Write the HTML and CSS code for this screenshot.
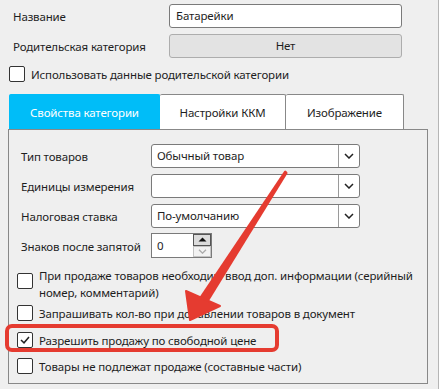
FILE: index.html
```html
<!DOCTYPE html>
<html lang="ru">
<head>
    <meta charset="UTF-8">
    <title>Свойства категории</title>
    <link rel="stylesheet" href="styles.css">
</head>
<body>
    <div class="window">
        <div class="field">
            <span class="label">Название</span>
            <div class="text-input">Батарейки</div>
        </div>
        <div class="field">
            <span class="label">Родительская категория</span>
            <div class="flat-button">Нет</div>
        </div>
        <div class="check top-check">
            <span class="box"></span>
            <span class="check-text">Использовать данные родительской категории</span>
        </div>

        <div class="tabs">
            <div class="tab active t1">Свойства категории</div>
            <div class="tab t2">Настройки ККМ</div>
            <div class="tab t3">Изображение</div>
        </div>
        <div class="panel">
            <div class="grid">
                <span class="label">Тип товаров</span>
                <div class="combo"><span class="value">Обычный товар</span><span class="drop"><svg width="10" height="6" viewBox="0 0 10 6"><path d="M1 1 L5 5 L9 1" fill="none" stroke="#222" stroke-width="1.5"/></svg></span></div>

                <span class="label">Единицы измерения</span>
                <div class="combo"><span class="value"></span><span class="drop"><svg width="10" height="6" viewBox="0 0 10 6"><path d="M1 1 L5 5 L9 1" fill="none" stroke="#222" stroke-width="1.5"/></svg></span></div>

                <span class="label">Налоговая ставка</span>
                <div class="combo"><span class="value">По-умолчанию</span><span class="drop"><svg width="10" height="6" viewBox="0 0 10 6"><path d="M1 1 L5 5 L9 1" fill="none" stroke="#222" stroke-width="1.5"/></svg></span></div>

                <span class="label">Знаков после запятой</span>
                <div class="spin">
                    <span class="value">0</span>
                    <div class="spin-buttons">
                        <span class="up"><svg width="9" height="5" viewBox="0 0 9 5"><path d="M0.5 4.5 L4.5 0.5 L8.5 4.5 Z" fill="#111"/></svg></span>
                        <span class="down"><svg width="9" height="5" viewBox="0 0 9 5"><path d="M1 0.8 L4.5 4.2 L8 0.8" fill="none" stroke="#aaa" stroke-width="1.3"/></svg></span>
                    </div>
                </div>
            </div>

            <div class="checks">
                <div class="check multi">
                    <span class="box"></span>
                    <span class="check-text">При продаже товаров необходим ввод доп. информации (серийный номер, комментарий)</span>
                </div>
                <div class="check c2">
                    <span class="box"></span>
                    <span class="check-text">Запрашивать кол-во при добавлении товаров в документ</span>
                </div>
                <div class="check c3">
                    <span class="box checked"><svg width="10" height="8" viewBox="0 0 10 8"><path d="M1 4 L4 6.8 L9 1" fill="none" stroke="#222" stroke-width="1.5"/></svg></span>
                    <span class="check-text">Разрешить продажу по свободной цене</span>
                </div>
                <div class="check c4">
                    <span class="box"></span>
                    <span class="check-text">Товары не подлежат продаже (составные части)</span>
                </div>
            </div>
        </div>
    </div>

    <!-- annotation overlay -->
    <div class="highlight"></div>
    <svg class="arrow" width="439" height="389" viewBox="0 0 439 389">
        <path d="M284.3 170.9 Q286 169.5 287.7 173.1 L207.2 303.7 L198.8 298.3 Z" fill="#e53b30"/>
        <path d="M186 291 L190 320 L220 306 Z" fill="#e53b30" stroke="#e53b30" stroke-width="2" stroke-linejoin="round"/>
    </svg>
</body>
</html>
```

FILE: styles.css
```css
body {
    margin: 0;
    background-color: #efefef;
    font-family: "Noto Sans", "Open Sans", sans-serif;
    font-size: 11.5px;
    letter-spacing: -0.15px;
    color: #1e1e1e;
    width: 439px;
    height: 389px;
    overflow: hidden;
    position: relative;
}
.window {
    padding: 4px 0 0 0;
    border-right: 1px solid #b5b5b5;
    height: 385px;
    width: 438px;
}
.field {
    display: flex;
    align-items: center;
    height: 24px;
    margin-bottom: 6px;
}
.field .label {
    width: 156px;
    padding-left: 13px;
}
.text-input {
    width: 233px;
    height: 24px;
    box-sizing: border-box;
    background-color: white;
    border: 1px solid #7a7a7a;
    border-radius: 3px;
    padding: 0 6px;
    line-height: 22px;
}
.flat-button {
    width: 233px;
    height: 24px;
    box-sizing: border-box;
    background-color: #e3e3e3;
    border: 1px solid #adadad;
    border-radius: 3px;
    text-align: center;
    line-height: 22px;
}
.check {
    display: flex;
    align-items: center;
    gap: 6px;
}
.box {
    width: 16px;
    height: 16px;
    box-sizing: border-box;
    flex: none;
    background-color: white;
    border: 1px solid #333;
    border-radius: 2px;
    display: flex;
    align-items: center;
    justify-content: center;
}
.top-check {
    margin: 2px 0 0 9px;
    height: 20px;
}
.tabs {
    display: flex;
    margin: 10px 0 0 9px;
    height: 35px;
}
.tab {
    box-sizing: border-box;
    height: 35px;
    display: flex;
    align-items: center;
    justify-content: center;
    background-color: white;
    border: 1px solid #888;
    border-bottom: none;
    border-radius: 2px 2px 0 0;
}
.tab.active {
    background-color: #00bdf8;
    border-color: #00bdf8;
    color: white;
}
.t1 { width: 151px; }
.t2 { width: 126px; border-left: none; }
.t3 { width: 118px; border-left: none; }
.panel {
    margin-left: 8px;
    width: 420px;
    height: 255px;
    box-sizing: border-box;
    border: 1px solid #888;
    padding: 14px 3px 0 12px;
}
.grid {
    display: grid;
    grid-template-columns: 130px 209px;
    row-gap: 6px;
    align-items: center;
}
.combo {
    display: flex;
    height: 24px;
    box-sizing: border-box;
    background-color: white;
    border: 1px solid #7a7a7a;
    border-radius: 3px;
}
.combo .value {
    flex: 1;
    padding-left: 5px;
    line-height: 22px;
}
.drop {
    width: 20px;
    border-left: 1px solid #9a9a9a;
    display: flex;
    align-items: center;
    justify-content: center;
}
.spin {
    display: flex;
    width: 61px;
    height: 25px;
    margin-top: -1px;
    box-sizing: border-box;
    background-color: white;
    border: 1px solid #7a7a7a;
}
.spin .value {
    flex: 1;
    padding-left: 5px;
    line-height: 23px;
}
.spin-buttons {
    width: 18px;
    display: flex;
    flex-direction: column;
}
.spin-buttons span {
    flex: 1;
    display: flex;
    align-items: center;
    justify-content: center;
    box-sizing: border-box;
}
.up {
    background-color: #dcdcdc;
    border: 1px solid #555;
}
.down {
    background-color: #f2f2f2;
    border: 1px solid #c4c4c4;
}
.checks {
    margin: 8.5px 0 0 -4px;
    display: flex;
    flex-direction: column;
}
.checks .check {
    gap: 6px;
    line-height: 17px;
}
.check.multi {
    align-items: flex-start;
}
.check.multi .box {
    margin-top: 6px;
}
.c2 { margin-top: 4px; }
.c3 { margin-top: 10px; }
.c4 { margin-top: 9px; }
.highlight {
    position: absolute;
    left: 5px;
    top: 324px;
    width: 274px;
    height: 28px;
    box-sizing: border-box;
    border: 4px solid #e53b30;
    border-radius: 7px;
}
.arrow {
    position: absolute;
    left: 0;
    top: 0;
}
```
